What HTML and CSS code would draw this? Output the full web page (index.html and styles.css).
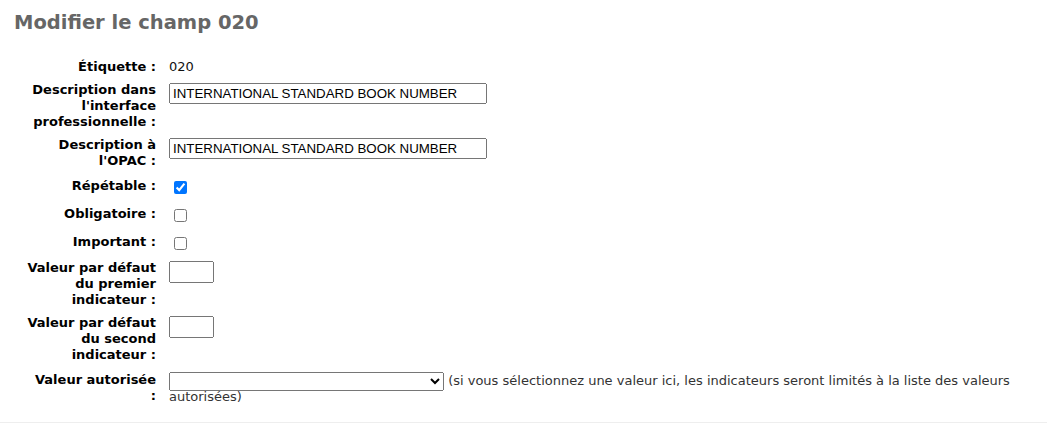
FILE: index.html
```html
<!DOCTYPE html>
<html lang="fr">
<head>
<meta charset="utf-8">
<title>Modifier le champ 020</title>
<link rel="stylesheet" href="styles.css">
</head>
<body>
<h1 class="page-title">Modifier le champ 020</h1>
<form class="edit-form">
  <fieldset class="rows">
    <ol class="field-list">
      <li class="field-row">
        <span class="field-label">Étiquette :</span>
        <span class="field-value">020</span>
      </li>
      <li class="field-row">
        <label class="field-label" for="liblibrarian">Description dans l'interface professionnelle :</label>
        <span class="field-value"><input class="text-input" type="text" id="liblibrarian" value="INTERNATIONAL STANDARD BOOK NUMBER"></span>
      </li>
      <li class="field-row">
        <label class="field-label" for="libopac">Description à l'OPAC :</label>
        <span class="field-value"><input class="text-input" type="text" id="libopac" value="INTERNATIONAL STANDARD BOOK NUMBER"></span>
      </li>
      <li class="field-row check-row">
        <label class="field-label" for="repeatable">Répétable :</label>
        <span class="field-value"><input class="check" type="checkbox" id="repeatable" checked></span>
      </li>
      <li class="field-row check-row">
        <label class="field-label" for="mandatory">Obligatoire :</label>
        <span class="field-value"><input class="check" type="checkbox" id="mandatory"></span>
      </li>
      <li class="field-row check-row">
        <label class="field-label" for="important">Important :</label>
        <span class="field-value"><input class="check" type="checkbox" id="important"></span>
      </li>
      <li class="field-row">
        <label class="field-label" for="ind1">Valeur par défaut du premier indicateur :</label>
        <span class="field-value"><input class="small-input" type="text" id="ind1"></span>
      </li>
      <li class="field-row">
        <label class="field-label" for="ind2">Valeur par défaut du second indicateur :</label>
        <span class="field-value"><input class="small-input" type="text" id="ind2"></span>
      </li>
      <li class="field-row select-row">
        <label class="field-label" for="authvalue">Valeur autorisée :</label>
        <span class="field-value hint-value"><select class="select-input" id="authvalue"><option value=""></option></select> (si vous sélectionnez une valeur ici, les indicateurs seront limités à la liste des valeurs autorisées)</span>
      </li>
    </ol>
  </fieldset>
  <div class="form-footer"></div>
</form>
</body>
</html>
```
FILE: styles.css
```css
html, body {
  margin: 0;
  padding: 0;
  background: #fff;
}

body {
  font-family: "DejaVu Sans", sans-serif;
  font-size: 13px;
  line-height: 16px;
  color: #000;
}

.page-title {
  margin: 0;
  padding: 11px 0 0 14px;
  font-size: 19.5px;
  line-height: 24px;
  font-weight: bold;
  color: #666;
}

.edit-form {
  margin: 0;
}

.rows {
  margin: 0;
  padding: 20px 0 13px 0;
  border: 0;
}

.field-list {
  list-style: none;
  margin: 0;
  padding: 0;
}

.field-row {
  display: flex;
  align-items: flex-start;
  padding: 3.5px 0;
}

.field-label {
  flex: 0 0 129px;
  width: 129px;
  margin-left: 27px;
  margin-right: 13px;
  text-align: right;
  font-weight: bold;
}

.field-value {
  flex: 1;
  color: #111;
}

.check-row .field-label,
.select-row .field-label {
  margin-top: 2px;
}

.hint-value {
  color: #333;
  padding-top: 3.5px;
  padding-right: 30px;
}

.text-input {
  display: block;
  width: 318px;
  height: 21px;
  box-sizing: border-box;
  margin: 1.5px 0 0 0;
  font-family: "Liberation Sans", sans-serif;
  font-size: 13.3px;
}

.small-input {
  display: block;
  width: 45px;
  height: 22px;
  box-sizing: border-box;
  margin: 1.5px 0 0 0;
}

.check {
  display: block;
  margin: 5.5px 3px 2.5px 5px;
}

.select-input {
  vertical-align: top;
  width: 275px;
  height: 19px;
  margin: -1px 0 -2px 0;
  font-family: "Liberation Sans", sans-serif;
  font-size: 13.33px;
}

.form-footer {
  border-top: 1px solid #eee;
  height: 0;
}
```
